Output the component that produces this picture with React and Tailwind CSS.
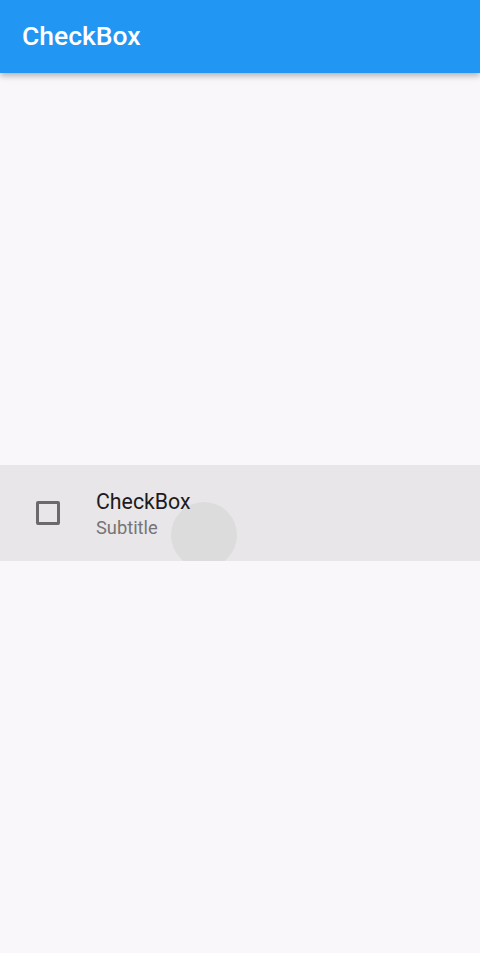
export default function App() {
  return (
    <div
      className="w-[480px] h-[953px] flex flex-col bg-[#f9f7fa] overflow-hidden"
      style={{ fontFamily: "Roboto, 'Noto Sans', sans-serif" }}
    >
      <header className="h-[73px] shrink-0 bg-[#2196f3] flex items-center pl-[22px] shadow-[0_3px_6px_rgba(0,0,0,0.28)] relative z-10">
        <h1 className="text-white text-[26.5px] font-medium leading-none">CheckBox</h1>
      </header>
      <main className="flex-1 flex items-center">
        <div className="relative w-full h-[96px] bg-[#e8e6e9] flex items-center overflow-hidden">
          {/* tap ripple, painted under the tile content */}
          <div className="absolute left-[171px] top-[37px] w-[66px] h-[66px] rounded-full bg-[#dcdcdc]" />
          <div className="relative w-[96px] shrink-0 flex items-center justify-start pl-[36px]">
            <div className="w-[24px] h-[24px] border-[3px] border-[#6a6a6a] rounded-[2px]" />
          </div>
          <div className="relative flex flex-col pt-[2px]">
            <span className="text-[21.3px] leading-[27px] text-[#1d1b20]">CheckBox</span>
            <span className="text-[18.3px] leading-[26px] text-[#757575]">Subtitle</span>
          </div>
        </div>
      </main>
    </div>
  );
}
